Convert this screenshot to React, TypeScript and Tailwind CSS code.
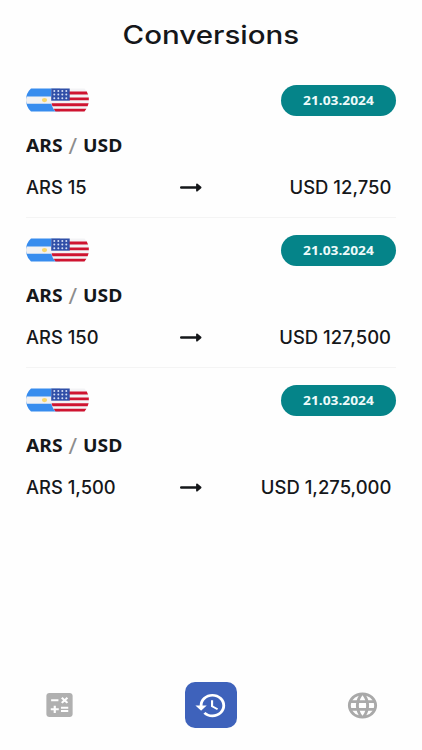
import React from 'react';
import { MdCalculate, MdHistory, MdLanguage } from 'react-icons/md';

interface Conversion {
  id: number;
  date: string;
  from: string;
  to: string;
  amount: string;
  result: string;
}

const conversions: Conversion[] = [
  { id: 1, date: '21.03.2024', from: 'ARS', to: 'USD', amount: '15', result: '12,750' },
  { id: 2, date: '21.03.2024', from: 'ARS', to: 'USD', amount: '150', result: '127,500' },
  { id: 3, date: '21.03.2024', from: 'ARS', to: 'USD', amount: '1,500', result: '1,275,000' },
];

const starColumns = [54.3, 58.3, 62.3, 66.3];
const starRows = [3, 6.6, 10.2];

const Flags: React.FC = () => (
  <svg className="mt-[3px]" width="63" height="24" viewBox="26 0 63 24">
    {/* Argentina */}
    <path d="M31 .5H60V23.5H31Q26 19 26 12T31 .5Z" fill="#378cee" />
    <path d="M26.7 8.4H56V15.8H26.7Q25.3 12 26.7 8.4Z" fill="#f1f1f3" />
    <ellipse cx="44.5" cy="12.1" rx="2.6" ry="2.1" fill="#f8d66b" />
    {/* United States */}
    <path d="M51 .5H84.5Q89 6 89 12T84.5 23.5H55.5Q51 19 51 12Z" fill="#f3f3f5" />
    <path d="M69 3.6H86.8L88 6.4H69ZM69 9.4H88.8V12.3H69ZM51.6 15.3H88.6L87.6 18.2H52.5ZM53.7 20.8H86.4L84.5 23.5H55.5Z" fill="#cf1430" />
    <path d="M51.2 .5H69.7V12.7H51.2Z" fill="#3150a8" />
    {starRows.map((y) =>
      starColumns.map((x) => <circle key={`${x}-${y}`} cx={x} cy={y} r="1" fill="#d5def2" />)
    )}
  </svg>
);

const Arrow: React.FC = () => (
  <svg width="22" height="10" viewBox="0 0 22 10">
    <path d="M1.2 4.5H17" stroke="#15171a" strokeWidth="2.4" strokeLinecap="round" />
    <path d="M17 1.3L20.6 4.5L17 7.7Z" fill="#15171a" stroke="#15171a" strokeWidth="1.8" strokeLinejoin="round" />
  </svg>
);

const ConversionItem: React.FC<{ item: Conversion }> = ({ item }) => (
  <li className="h-[150px] pt-[17px] border-b border-[#f4f4f4] last:border-transparent">
    <div className="flex items-start justify-between">
      <Flags />
      <span className="flex h-[31px] w-[115px] items-center justify-center rounded-full bg-[#058489] text-[13px] font-bold text-[#eefafa] font-['Noto_Sans',sans-serif]">
        <span className="inline-block scale-x-[1.06]">{item.date}</span>
      </span>
    </div>
    <div className="mt-[15px] flex h-7 items-center text-lg leading-7 font-bold font-['Noto_Sans',sans-serif]">
      <span className="inline-block origin-left scale-x-[1.07]">{item.from}</span>
      <span className="mr-[6px] ml-[9px] inline-block translate-y-px scale-x-[1.1] text-[21px] leading-7 font-normal text-[#8d8d8d]">/</span>
      <span className="inline-block origin-left scale-x-[1.07]">{item.to}</span>
    </div>
    <div className="mt-[15px] flex h-7 items-center text-lg font-medium">
      <div className="w-[154px]">
        <span className="inline-block origin-left scale-x-[1.02]">{item.from} {item.amount}</span>
      </div>
      <Arrow />
      <div className="flex-1 pr-[5px] text-right">
        <span className="inline-block origin-right scale-x-[1.025]">{item.to} {item.result}</span>
      </div>
    </div>
  </li>
);

const App: React.FC = () => {
  return (
    <div className="flex h-[750px] w-[422px] flex-col overflow-hidden bg-[#fefefe] text-[#15171a] font-['Inter',sans-serif]">
      <header className="flex h-[68px] shrink-0 items-center justify-center pt-[3px]">
        <h1 className="text-[25px] font-medium">
          <span className="inline-block scale-x-[1.18]">Conversions</span>
        </h1>
      </header>

      <ul className="flex-1 pl-[26px] pr-[26px]">
        {conversions.map((item) => (
          <ConversionItem key={item.id} item={item} />
        ))}
      </ul>

      {/* Bottom navigation */}
      <nav className="flex h-[90px] shrink-0 items-center justify-between pl-[42px] pr-[42px]">
        <button className="text-[#b0b0b0]">
          <MdCalculate className="h-[32px] w-[35px]" preserveAspectRatio="none" />
        </button>
        <button className="flex h-[46px] w-[52px] items-center justify-center rounded-[10px] bg-[#3e62bb] text-white">
          <MdHistory className="h-[31px] w-[34px]" preserveAspectRatio="none" />
        </button>
        <button className="text-[#a9a9a9]">
          <MdLanguage className="h-[31px] w-[35px]" preserveAspectRatio="none" />
        </button>
      </nav>
    </div>
  );
};

export default App;
